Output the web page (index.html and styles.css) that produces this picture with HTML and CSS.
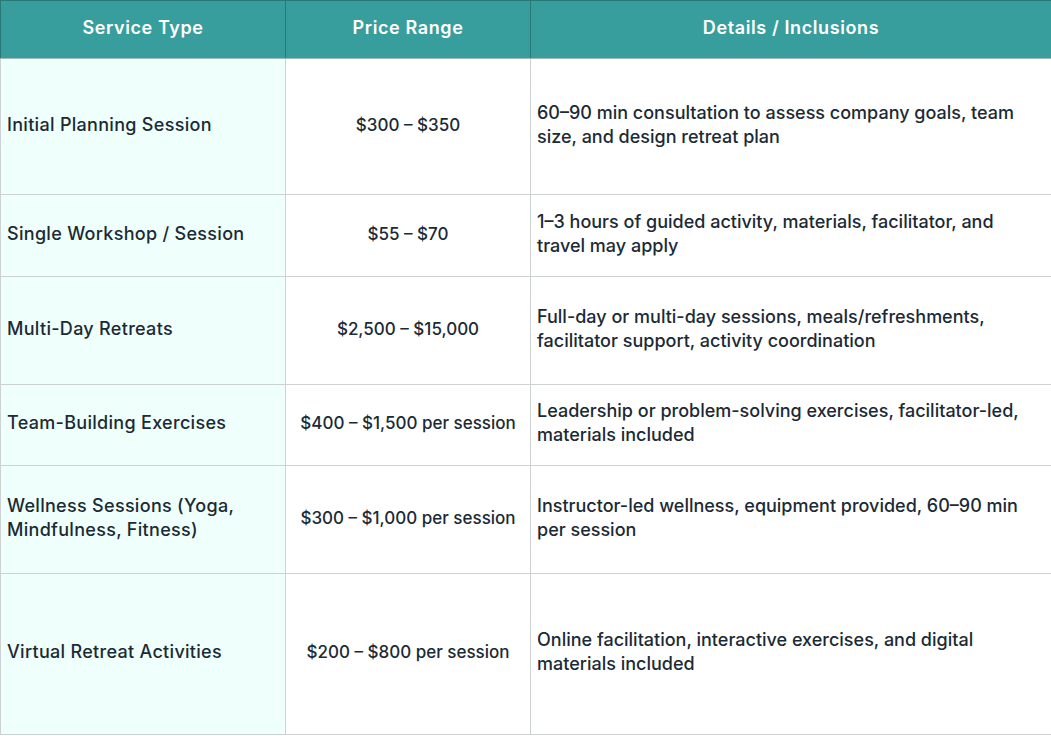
FILE: index.html
```html
<!DOCTYPE html>
<html lang="en">
<head>
<meta charset="utf-8">
<title>Retreat Pricing</title>
<link rel="stylesheet" href="styles.css">
</head>
<body>
<table class="pricing">
  <colgroup>
    <col class="col-type">
    <col class="col-price">
    <col class="col-details">
  </colgroup>
  <thead>
    <tr class="head-row">
      <th>Service Type</th>
      <th>Price Range</th>
      <th>Details / Inclusions</th>
    </tr>
  </thead>
  <tbody>
    <tr class="row-1">
      <td class="type">Initial Planning Session</td>
      <td class="price">$300 – $350</td>
      <td class="details">60–90 min consultation to assess company goals, team size, and design retreat plan</td>
    </tr>
    <tr class="row-2">
      <td class="type">Single Workshop / Session</td>
      <td class="price">$55 – $70</td>
      <td class="details">1–3 hours of guided activity, materials, facilitator, and travel may apply</td>
    </tr>
    <tr class="row-3">
      <td class="type">Multi-Day Retreats</td>
      <td class="price">$2,500 – $15,000</td>
      <td class="details">Full-day or multi-day sessions, meals/refreshments, facilitator support, activity coordination</td>
    </tr>
    <tr class="row-4">
      <td class="type">Team-Building Exercises</td>
      <td class="price">$400 – $1,500 per session</td>
      <td class="details">Leadership or problem-solving exercises, facilitator-led, materials included</td>
    </tr>
    <tr class="row-5">
      <td class="type">Wellness Sessions (Yoga, Mindfulness, Fitness)</td>
      <td class="price">$300 – $1,000 per session</td>
      <td class="details">Instructor-led wellness, equipment provided, 60–90 min per session</td>
    </tr>
    <tr class="row-6">
      <td class="type">Virtual Retreat Activities</td>
      <td class="price">$200 – $800 per session</td>
      <td class="details">Online facilitation, interactive exercises, and digital materials included</td>
    </tr>
  </tbody>
</table>
</body>
</html>
```
FILE: styles.css
```css
html, body {
  margin: 0;
  padding: 0;
  background: #ffffff;
}

body {
  font-family: "Inter", "Liberation Sans", sans-serif;
  color: #1b2a35;
}

.pricing {
  width: 1051px;
  border-collapse: collapse;
  table-layout: fixed;
  font-size: 18px;
  font-weight: 500;
  line-height: 24px;
}

.col-type { width: 285px; }
.col-price { width: 245px; }
.col-details { width: 521px; }

.head-row {
  height: 58px;
}

.head-row th {
  background: #389d9d;
  color: #ffffff;
  font-weight: 600;
  letter-spacing: 0.6px;
  text-align: center;
  vertical-align: middle;
  padding: 0 6px 4px;
  border: 1px solid #2a7777;
  border-bottom-color: #9fb9b9;
}

.pricing td {
  border: 1px solid #cdd1d1;
  padding: 0 6px 4px;
  vertical-align: middle;
}

.type {
  background: #effffb;
  text-align: left;
  letter-spacing: 0.3px;
}

.price {
  text-align: center;
  background: #ffffff;
  font-size: 17px;
}

.details {
  text-align: left;
  background: #ffffff;
}

.row-1 { height: 136px; }
.row-2 { height: 82px; }
.row-3 { height: 108px; }
.row-4 { height: 81px; }
.row-5 { height: 108px; }
.row-6 { height: 161px; }
```
